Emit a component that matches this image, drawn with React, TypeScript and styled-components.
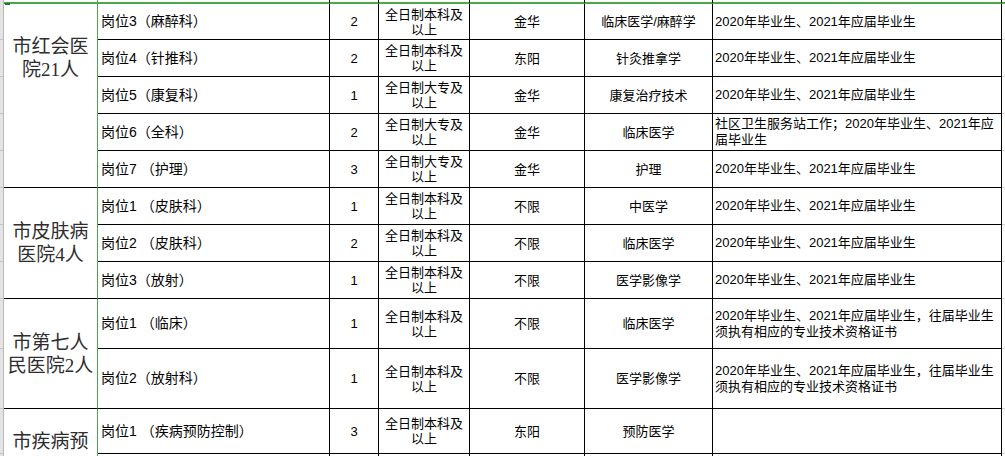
import React from 'react';
import styled, { createGlobalStyle } from 'styled-components';

const GlobalStyle = createGlobalStyle`
  * { box-sizing: border-box; }
  body {
    margin: 0;
    background: #fff;
    overflow: hidden;
  }
`;

const GREEN = '#4aa84a';
const GRID = '#000';

// column widths incl. right border: gutter, hospital, post, count, edu, place, major, note, tail
const COLS = [4, 94, 232, 49, 91, 115, 128, 289, 20];

const Sheet = styled.div`
  position: relative;
  width: 1005px;
  height: 456px;
  overflow: hidden;
  font-family: "Liberation Sans", "Noto Sans CJK SC", sans-serif;
  color: #000;
`;

const FillHandle = styled.div`
  position: absolute;
  left: 5px;
  top: 3px;
  width: 5px;
  height: 2px;
  background: #217346;
`;

const Table = styled.table`
  border-collapse: separate;
  border-spacing: 0;
  table-layout: fixed;
  width: ${COLS.reduce((a, b) => a + b, 0)}px;
`;

const Col = styled.col<{ $w: number }>`
  width: ${p => p.$w}px;
`;

const Row = styled.tr<{ $h: number }>`
  height: ${p => p.$h}px;
`;

const TopCell = styled.td<{ $edge: string }>`
  padding: 0;
  height: 4px;
  border-bottom: 2px solid ${GREEN};
  border-right: 1px solid ${p => p.$edge};
`;

const GutterCell = styled.td`
  padding: 0;
  background: #e3e3e3;
  border-right: 1px solid #b9b9b9;
  border-bottom: 1px solid #c4c4c4;
`;

const GutterTop = styled(GutterCell)`
  border-bottom: none;
`;

const NameCell = styled.td<{ $top?: number }>`
  padding: ${p => (p.$top !== undefined ? `${p.$top}px 0 0` : '0')};
  vertical-align: ${p => (p.$top !== undefined ? 'top' : 'middle')};
  border-right: 1px solid ${GREEN};
  border-bottom: 1px solid ${GRID};
  font-family: "Liberation Serif", "Noto Sans CJK SC", serif;
  font-size: 19px;
  line-height: 23px;
  color: #2e2e2e;
  text-align: center;
  white-space: pre-line;
`;

const Cell = styled.td`
  padding: 0;
  vertical-align: middle;
  border-right: 1px solid ${GRID};
  border-bottom: 1px solid ${GRID};
  font-size: 13px;
  line-height: 15px;
  white-space: pre-line;
`;

const PostCell = styled(Cell)`
  padding-left: 3px;
  font-size: 14px;
`;

const CenterCell = styled(Cell)`
  text-align: center;
`;

const NoteCell = styled(Cell)`
  padding-left: 2px;
  line-height: 16px;
`;

const TailCell = styled.td`
  padding: 0;
  border-bottom: 1px solid #d4d4d4;
`;

type Post = {
  post: string;
  num: string;
  edu: string;
  place: string;
  major: string;
  note: string;
  h: number;
};

type Group = { name: string; top?: number; posts: Post[] };

const BK = '全日制本科及\n以上';
const DZ = '全日制大专及\n以上';
const GRAD = '2020年毕业生、2021年应届毕业生';
const GRAD_PAST = '2020年毕业生、2021年应届毕业生，往届毕业生\n须执有相应的专业技术资格证书';

const groups: Group[] = [
  {
    name: '市红会医\n院21人',
    top: 31,
    posts: [
      { post: '岗位3（麻醉科）', num: '2', edu: BK, place: '金华', major: '临床医学/麻醉学', note: GRAD, h: 36 },
      { post: '岗位4（针推科）', num: '2', edu: BK, place: '东阳', major: '针灸推拿学', note: GRAD, h: 37 },
      { post: '岗位5（康复科）', num: '1', edu: DZ, place: '金华', major: '康复治疗技术', note: GRAD, h: 37 },
      { post: '岗位6（全科）', num: '2', edu: DZ, place: '金华', major: '临床医学', note: '社区卫生服务站工作；2020年毕业生、2021年应\n届毕业生', h: 37 },
      { post: '岗位7 （护理）', num: '3', edu: DZ, place: '金华', major: '护理', note: GRAD, h: 37 },
    ],
  },
  {
    name: '市皮肤病\n医院4人',
    posts: [
      { post: '岗位1 （皮肤科）', num: '1', edu: BK, place: '不限', major: '中医学', note: GRAD, h: 37 },
      { post: '岗位2 （皮肤科）', num: '2', edu: BK, place: '不限', major: '临床医学', note: GRAD, h: 37 },
      { post: '岗位3（放射）', num: '1', edu: BK, place: '不限', major: '医学影像学', note: GRAD, h: 37 },
    ],
  },
  {
    name: '市第七人\n民医院2人',
    posts: [
      { post: '岗位1 （临床）', num: '1', edu: BK, place: '不限', major: '临床医学', note: GRAD_PAST, h: 50 },
      { post: '岗位2（放射科）', num: '1', edu: BK, place: '不限', major: '医学影像学', note: GRAD_PAST, h: 60 },
    ],
  },
  {
    name: '市疾病预',
    top: 21,
    posts: [
      { post: '岗位1 （疾病预防控制）', num: '3', edu: BK, place: '东阳', major: '预防医学', note: '', h: 45 },
      { post: '', num: '', edu: '', place: '', major: '', note: '', h: 40 },
    ],
  },
];

const PostRow = ({ p, name }: { p: Post; name?: React.ReactNode }) => (
  <Row $h={p.h}>
    <GutterCell />
    {name}
    <PostCell>{p.post}</PostCell>
    <CenterCell>{p.num}</CenterCell>
    <CenterCell>{p.edu}</CenterCell>
    <CenterCell>{p.place}</CenterCell>
    <CenterCell>{p.major}</CenterCell>
    <NoteCell>{p.note}</NoteCell>
    <TailCell />
  </Row>
);

export default function App() {
  return (
    <>
      <GlobalStyle />
      <Sheet>
        <Table>
          <colgroup>
            {COLS.map((w, i) => (
              <Col key={i} $w={w} />
            ))}
          </colgroup>
          <tbody>
            <tr>
              <GutterTop />
              <TopCell $edge={GREEN} />
              {[0, 1, 2, 3, 4, 5].map(i => (
                <TopCell key={i} $edge={GRID} />
              ))}
              <TopCell $edge="transparent" />
            </tr>
            {groups.map(g =>
              g.posts.map((p, i) => (
                <PostRow
                  key={g.name + i}
                  p={p}
                  name={
                    i === 0 ? (
                      <NameCell rowSpan={g.posts.length} $top={g.top}>
                        {g.name}
                      </NameCell>
                    ) : undefined
                  }
                />
              ))
            )}
          </tbody>
        </Table>
        <FillHandle />
      </Sheet>
    </>
  );
}
